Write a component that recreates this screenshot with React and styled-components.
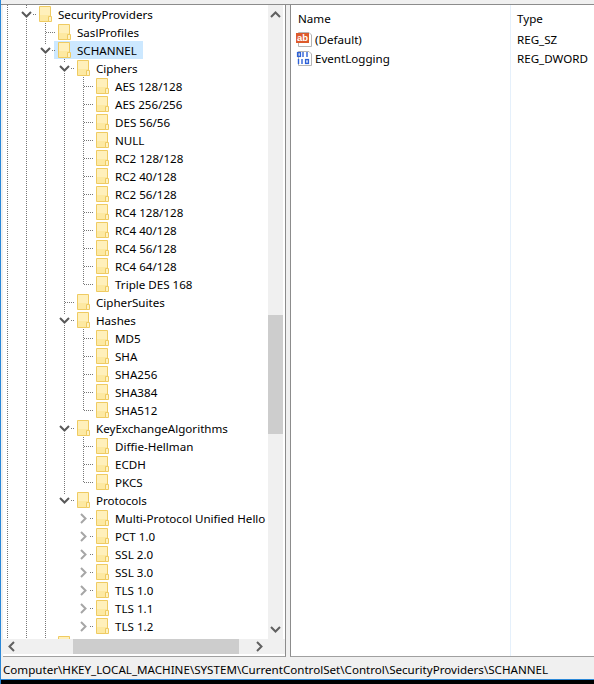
import React from "react";
import styled, { createGlobalStyle } from "styled-components";

const tree = {
  name: "SecurityProviders",
  open: true,
  children: [
    { name: "SaslProfiles" },
    {
      name: "SCHANNEL",
      open: true,
      selected: true,
      children: [
        {
          name: "Ciphers",
          open: true,
          children: [
            "AES 128/128",
            "AES 256/256",
            "DES 56/56",
            "NULL",
            "RC2 128/128",
            "RC2 40/128",
            "RC2 56/128",
            "RC4 128/128",
            "RC4 40/128",
            "RC4 56/128",
            "RC4 64/128",
            "Triple DES 168",
          ].map((name) => ({ name })),
        },
        { name: "CipherSuites" },
        {
          name: "Hashes",
          open: true,
          children: ["MD5", "SHA", "SHA256", "SHA384", "SHA512"].map((name) => ({ name })),
        },
        {
          name: "KeyExchangeAlgorithms",
          open: true,
          children: ["Diffie-Hellman", "ECDH", "PKCS"].map((name) => ({ name })),
        },
        {
          name: "Protocols",
          open: true,
          children: [
            "Multi-Protocol Unified Hello",
            "PCT 1.0",
            "SSL 2.0",
            "SSL 3.0",
            "TLS 1.0",
            "TLS 1.1",
            "TLS 1.2",
          ].map((name) => ({ name, closed: true })),
        },
      ],
    },
    // label sits under the scrollbar, only the folder top shows
    { name: "" },
  ],
};

const Folder = () => (
  <FolderSvg width="13" height="16" viewBox="0 0 13 16">
    <path d="M0.5 0.5H11.5V15.5H0.5Z" fill="#fde9a2" stroke="#efcb62" />
    <path d="M1 1H11V9H1Z" fill="#fff0bb" />
    <path d="M9.5 15.5V10.5H12.5V15.5Z" fill="#fff3c4" stroke="#efcb62" />
  </FolderSvg>
);

const Chevron = ({ closed }) =>
  closed ? (
    <ChevronSvg width="9" height="11" viewBox="0 0 9 11">
      <path d="M2 1L6.5 5.5L2 10" fill="none" stroke="#a6a6a6" strokeWidth="2" />
    </ChevronSvg>
  ) : (
    <ChevronSvg width="11" height="9" viewBox="0 0 11 9">
      <path d="M1 2L5.5 6.5L10 2" fill="none" stroke="#595959" strokeWidth="2" />
    </ChevronSvg>
  );

const TreeNode = ({ node, guides, last }) => (
  <>
    <Row>
      {guides.map((on, i) => (
        <Guide key={i} $on={on} />
      ))}
      <Branch $last={last} $noLine={node.closed}>
        {(node.children || node.closed) && (
          <Toggle>
            <Chevron closed={node.closed} />
          </Toggle>
        )}
      </Branch>
      <Item $selected={node.selected}>
        <Folder />
        {node.name && <Label>{node.name}</Label>}
      </Item>
    </Row>
    {node.children &&
      node.children.map((child, i) => (
        <TreeNode
          key={child.name || i}
          node={child}
          guides={[...guides, !last]}
          last={i === node.children.length - 1}
        />
      ))}
  </>
);

const AbIcon = () => (
  <svg width="17" height="17" viewBox="0 0 17 17">
    <path d="M2.5 1.5H13L15.5 4V15.5H2.5Z" fill="#fff" stroke="#b5b5b5" />
    <rect x="0" y="2" width="13" height="10" fill="#dd5a2c" />
    <text x="6.5" y="10" textAnchor="middle" fontSize="9.5" fontWeight="700" fill="#fff" fontFamily="Liberation Sans">
      ab
    </text>
  </svg>
);

const BinIcon = () => (
  <svg width="17" height="17" viewBox="0 0 17 17">
    <path d="M2.5 1.5H13L15.5 4V15.5H2.5Z" fill="#fff" stroke="#b5b5b5" />
    <g fill="none" stroke="#2f62d8" strokeWidth="1.4">
      <rect x="1.6" y="2.6" width="2.8" height="3.8" />
      <path d="M7 2V7M11 2V7" />
      <path d="M2.5 9V14M6 9V14" />
      <rect x="9.6" y="9.6" width="2.8" height="3.8" />
    </g>
  </svg>
);

export default function App() {
  return (
    <Window>
      <GlobalStyle />
      <TopEdge />
      <Panes>
        <TreePane>
          <TreeBody>
            <TreeList>
              <TreeNode node={tree} guides={[true]} last={false} />
            </TreeList>
            <VScroll>
              <ArrowBtn $vertical>
                <svg width="11" height="8" viewBox="0 0 11 8">
                  <path d="M1 6L5.5 1.5L10 6" fill="none" stroke="#606060" strokeWidth="2" />
                </svg>
              </ArrowBtn>
              <VTrack>
                <VThumb />
              </VTrack>
              <ArrowBtn $vertical>
                <svg width="11" height="8" viewBox="0 0 11 8">
                  <path d="M1 2L5.5 6.5L10 2" fill="none" stroke="#606060" strokeWidth="2" />
                </svg>
              </ArrowBtn>
            </VScroll>
          </TreeBody>
          <HScroll>
            <ArrowBtn>
              <svg width="8" height="11" viewBox="0 0 8 11">
                <path d="M6 1L1.5 5.5L6 10" fill="none" stroke="#606060" strokeWidth="2" />
              </svg>
            </ArrowBtn>
            <HTrack>
              <HThumb />
            </HTrack>
            <ArrowBtn>
              <svg width="8" height="11" viewBox="0 0 8 11">
                <path d="M2 1L6.5 5.5L2 10" fill="none" stroke="#606060" strokeWidth="2" />
              </svg>
            </ArrowBtn>
          </HScroll>
        </TreePane>
        <ListPane>
          <ListRow $header>
            <NameCell $header>Name</NameCell>
            <TypeCell>Type</TypeCell>
          </ListRow>
          <ListRow>
            <NameCell>
              <AbIcon />
              (Default)
            </NameCell>
            <TypeCell>REG_SZ</TypeCell>
          </ListRow>
          <ListRow>
            <NameCell>
              <BinIcon />
              EventLogging
            </NameCell>
            <TypeCell>REG_DWORD</TypeCell>
          </ListRow>
          <ColumnRule />
        </ListPane>
      </Panes>
      <StatusBar>Computer\HKEY_LOCAL_MACHINE\SYSTEM\CurrentControlSet\Control\SecurityProviders\SCHANNEL</StatusBar>
      <BottomEdge />
    </Window>
  );
}

const GlobalStyle = createGlobalStyle`
  html, body {
    margin: 0;
    background: #000;
  }
  body {
    font-family: "Noto Sans", "Open Sans", sans-serif;
    font-size: 11.6px;
    color: #000;
  }
`;

const Window = styled.div`
  width: 594px;
  height: 684px;
  display: flex;
  flex-direction: column;
  overflow: hidden;
  background: #f0f0f0;
  border-left: 1px solid #2b88d8;
  box-sizing: border-box;
`;

const TopEdge = styled.div`
  height: 4px;
  flex: none;
  background: #f0f0f0;
  border-bottom: 1px solid #8c8c8c;
`;

const Panes = styled.div`
  flex: 1;
  min-height: 0;
  display: flex;
  gap: 4px;
  padding: 0 0 0 2px;
`;

const TreePane = styled.div`
  width: 282px;
  flex: none;
  display: flex;
  flex-direction: column;
  background: #fff;
  border-right: 1px solid #8c8c8c;
  border-bottom: 1px solid #a0a0a0;
`;

const TreeBody = styled.div`
  flex: 1;
  min-height: 0;
  display: flex;
`;

const TreeList = styled.div`
  flex: 1;
  min-width: 0;
  overflow: hidden;
  margin-left: -5px;
`;

const Row = styled.div`
  height: 18px;
  display: flex;
  align-items: stretch;
  white-space: nowrap;
`;

const dots = "linear-gradient(#777 50%, transparent 50%)";

const Guide = styled.span`
  width: 19px;
  flex: none;
  background-image: ${({ $on }) => ($on ? dots : "none")};
  background-size: 1px 2px;
  background-repeat: repeat-y;
  background-position: 9px 0;
`;

const Branch = styled.span`
  width: 19px;
  flex: none;
  position: relative;

  &::before {
    content: "";
    display: ${({ $noLine }) => ($noLine ? "none" : "block")};
    position: absolute;
    left: 9px;
    top: 0;
    width: 1px;
    height: ${({ $last }) => ($last ? "10px" : "100%")};
    background-image: ${dots};
    background-size: 1px 2px;
  }

  &::after {
    content: "";
    position: absolute;
    left: 10px;
    right: 0;
    top: 9px;
    height: 1px;
    background-image: linear-gradient(90deg, #777 50%, transparent 50%);
    background-size: 2px 1px;
  }
`;

const Toggle = styled.span`
  position: absolute;
  z-index: 1;
  left: 4px;
  top: 4px;
  width: 11px;
  height: 10px;
  display: flex;
  align-items: center;
  justify-content: center;
  background: #fff;
`;

const ChevronSvg = styled.svg`
  display: block;
`;

const Item = styled.span`
  display: inline-flex;
  align-items: center;
  padding: 0 6px 0 0;
  margin-left: -1px;
  background: ${({ $selected }) => ($selected ? "#cce8ff" : "transparent")};
`;

const FolderSvg = styled.svg`
  display: block;
  flex: none;
  margin-left: 4px;
`;

const Label = styled.span`
  margin-left: 6px;
`;

const VScroll = styled.div`
  width: 15px;
  margin-right: 2px;
  flex: none;
  display: flex;
  flex-direction: column;
  background: #f0f0f0;
`;

const ArrowBtn = styled.div`
  width: 17px;
  height: ${({ $vertical }) => ($vertical ? "20px" : "15px")};
  flex: none;
  display: flex;
  align-items: center;
  justify-content: center;
  align-self: center;
`;

const VTrack = styled.div`
  flex: 1;
  padding-top: 290px;
`;

const VThumb = styled.div`
  height: 119px;
  background: #cdcdcd;
`;

const HScroll = styled.div`
  height: 15px;
  flex: none;
  display: flex;
  background: #f0f0f0;
  margin-bottom: 2px;
  padding-right: 18px;
`;

const HTrack = styled.div`
  flex: 1;
  padding-left: 53px;
`;

const HThumb = styled.div`
  width: 166px;
  height: 100%;
  background: #cdcdcd;
`;

const ListPane = styled.div`
  flex: 1;
  position: relative;
  background: #fff;
  border-left: 1px solid #8c8c8c;
  border-bottom: 1px solid #a0a0a0;
  padding-top: 1px;
`;

const ListRow = styled.div`
  display: flex;
  align-items: center;
  height: ${({ $header }) => ($header ? "24px" : "19px")};
  white-space: nowrap;
`;

const NameCell = styled.div`
  width: 220px;
  flex: none;
  display: flex;
  align-items: center;
  gap: 2px;
  padding-left: ${({ $header }) => ($header ? "7px" : "5px")};
  box-sizing: border-box;
`;

const TypeCell = styled.div`
  padding-left: 6px;
`;

const ColumnRule = styled.div`
  position: absolute;
  left: 219px;
  top: 0;
  bottom: 0;
  width: 1px;
  background: #e5f0fb;
`;

const StatusBar = styled.div`
  height: 22px;
  flex: none;
  line-height: 25px;
  padding-left: 2px;
  background: #f0f0f0;
  border-bottom: 1px solid #2b88d8;
  white-space: nowrap;
  overflow: hidden;
`;

const BottomEdge = styled.div`
  height: 4px;
  flex: none;
  margin-left: -1px;
  background: #000;
`;
